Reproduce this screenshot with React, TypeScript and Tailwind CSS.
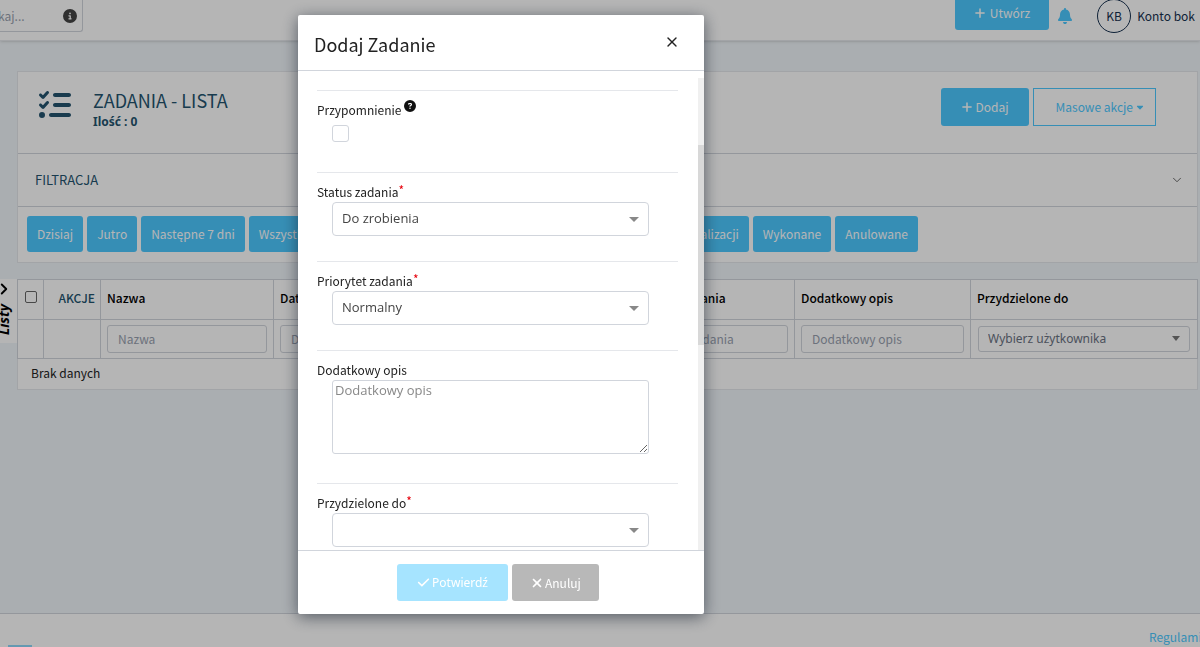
import type { ReactNode } from "react"
import { FaBell, FaCaretDown, FaCheck, FaCircleInfo, FaCircleQuestion, FaListCheck, FaPlus, FaXmark } from "react-icons/fa6"
import { ChevronDown, X } from "lucide-react"

const dayFilters = ["Dzisiaj", "Jutro", "Następne 7 dni"]
const hiddenFilters = ["Wszystkie", "Przeterminowane", "Do zrobienia", "W trakcie realizacji"]
const statusFilters = ["Wykonane", "Anulowane"]

const FilterButton = ({ children, grow }: { children: ReactNode; grow?: boolean }) => (
  <button className={`h-9 rounded-[3px] bg-[#4dc9ff] px-[10px] text-xs whitespace-nowrap text-white ${grow ? "grow" : ""}`}>
    {children}
  </button>
)

const TopBar = () => (
  <header className="flex h-[41px] shrink-0 justify-between border-b border-gray-200 bg-white shadow-sm">
    <div className="-ml-8 flex h-8 w-[115px] items-center rounded-br-[3px] border-r border-b border-gray-300 pr-[5px]">
      <input aria-label="Szukaj" placeholder="Szukaj..." className="w-full min-w-0 pl-[10px] text-xs placeholder:text-gray-400" />
      <FaCircleInfo className="size-[14px] shrink-0 text-[#444]" />
    </div>
    <div className="flex h-8 items-center pr-[5px]">
      <button className="mb-[2px] flex h-[38px] items-center gap-1 self-end rounded-[3px] bg-[#4dc9ff] px-[19px] pt-1 text-xs text-white">
        <FaPlus className="size-3" />
        Utwórz
      </button>
      <button aria-label="Powiadomienia" className="ml-2 text-[#4dc9ff]">
        <FaBell className="size-4" />
      </button>
      <a href="#konto" className="ml-6 flex items-center gap-[6px] text-xs whitespace-nowrap text-[#16304f]">
        <span className="flex size-[34px] items-center justify-center rounded-full border border-[#16304f]">KB</span>
        Konto bok
      </a>
    </div>
  </header>
)

const ListHeader = () => (
  <section className="border border-gray-200 bg-white">
    <div className="flex h-[81px] items-start pt-4 pr-[41px] pl-[21px]">
      <FaListCheck className="mt-px size-8 text-[#24546f]" />
      <div className="ml-[22px] text-[#24546f]">
        <h1 className="text-lg leading-6">ZADANIA - LISTA</h1>
        <p className="font-['Noto_Sans',sans-serif] text-xs leading-5 font-bold">Ilość : 0</p>
      </div>
      <div className="ml-auto flex gap-1">
        <button className="flex h-[38px] items-center gap-[3px] rounded-[3px] bg-[#4dc9ff] px-5 text-xs text-white">
          <FaPlus className="size-3" />
          Dodaj
        </button>
        <button className="flex h-[38px] items-center gap-[2px] border border-[#4dc9ff] pr-[10px] pl-[22px] text-xs text-[#4dc9ff]">
          Masowe akcje
          <FaCaretDown className="size-[10px]" />
        </button>
      </div>
    </div>
    <button className="flex h-[54px] w-full items-center justify-between border-y border-gray-300 pr-[13px] pl-[17px] text-[13px] text-[#24546f]">
      FILTRACJA
      <ChevronDown className="size-[14px] text-[#555]" strokeWidth={1.5} />
    </button>
    <div className="flex h-[55px] items-center gap-1 pb-[2px] pl-[9px]">
      {dayFilters.map((f) => <FilterButton key={f}>{f}</FilterButton>)}
      <div className="flex w-[500px] gap-1">
        {hiddenFilters.map((f, i) => <FilterButton key={f} grow={i === 1 || i === 2}>{f}</FilterButton>)}
      </div>
      {statusFilters.map((f) => <FilterButton key={f}>{f}</FilterButton>)}
    </div>
  </section>
)

const ColumnFilter = ({ label }: { label: string }) => (
  <input aria-label={label} placeholder={label} className="block h-7 w-full rounded-[3px] border border-gray-300 px-[10px] pb-[2px] text-xs placeholder:text-gray-400" />
)

const textColumns = ["Nazwa", "Data dodania", "Status zadania", "Priorytet zadania", "Dodatkowy opis"]

const TaskTable = () => (
  <table className="mt-4 w-full table-fixed border-collapse bg-white text-xs">
    <colgroup>
      <col className="w-[26px]" />
      <col className="w-[57px]" />
      <col className="w-[173px]" />
      <col className="w-[174px]" />
      <col className="w-[173px]" />
      <col className="w-[174px]" />
      <col className="w-[176px]" />
      <col />
    </colgroup>
    <thead>
      <tr className="h-10">
        <th className="border border-gray-300 pb-[6px]">
          <input type="checkbox" aria-label="Zaznacz wszystkie" className="mx-auto block size-3 appearance-none rounded-[2px] border border-[#666]" />
        </th>
        <th className="border border-gray-300 pr-[5px] pb-1 text-right font-medium text-[#24546f]">AKCJE</th>
        {[...textColumns, "Przydzielone do"].map((c) => (
          <th key={c} className="border border-gray-300 px-[6px] pb-1 text-left font-medium text-black">{c}</th>
        ))}
      </tr>
      <tr className="h-[39px]">
        <td className="border border-gray-300"></td>
        <td className="border border-gray-300"></td>
        {textColumns.map((c) => (
          <td key={c} className="border border-gray-300 px-[6px]"><ColumnFilter label={c} /></td>
        ))}
        <td className="border border-gray-300 px-[7px]">
          <div className="relative">
            <select aria-label="Przydzielone do" className="block h-[26px] w-full appearance-none rounded-[3px] border border-gray-300 px-[9px] font-['Noto_Sans',sans-serif] text-xs text-gray-500">
              <option>Wybierz użytkownika</option>
            </select>
            <svg viewBox="0 0 8 5" className="pointer-events-none absolute top-[10px] right-[10px] w-2 text-[#777]"><path d="M0 0h8L4 5z" fill="currentColor" /></svg>
          </div>
        </td>
      </tr>
    </thead>
    <tbody>
      <tr className="h-[31px]">
        <td colSpan={8} className="border border-gray-200 px-[13px] pb-[2px] text-[#222]">Brak danych</td>
      </tr>
    </tbody>
  </table>
)

const Field = ({ id, label, required, hint, children }: { id: string; label: string; required?: boolean; hint?: boolean; children: ReactNode }) => (
  <div className="border-t border-gray-200 pt-[9px]">
    <label htmlFor={id} className="flex h-5 text-xs leading-5 text-[#222]">
      {label}
      {required && <span className="leading-4 text-red-600">*</span>}
      {hint && <FaCircleQuestion className="ml-[3px] size-3 text-[#111]" />}
    </label>
    <div className="pr-[29px] pl-[15px]">{children}</div>
  </div>
)

const SelectBox = ({ id, value }: { id: string; value: string }) => (
  <div className="relative mb-[25px]">
    <select id={id} className="block h-[34px] w-full appearance-none rounded-[4px] border border-gray-300 bg-white px-[9px] font-['Open_Sans',sans-serif] text-[13px] text-[#444]">
      <option>{value}</option>
    </select>
    <svg viewBox="0 0 10 5" className="pointer-events-none absolute top-[15px] right-[10px] w-[10px] text-[#888]"><path d="M0 0h10L5 5z" fill="currentColor" /></svg>
  </div>
)

const TaskDialog = () => (
  <div className="fixed inset-0 flex items-start justify-center bg-black/29 pt-[15px] pr-[198px]">
    <div role="dialog" aria-labelledby="dialog-title" className="flex h-[calc(100vh-48px)] w-[406px] flex-col rounded-[2px] bg-white shadow-[0_3px_16px_rgba(20,30,45,0.6)]">
      <div className="flex h-14 shrink-0 items-center justify-between border-b border-gray-300 pr-6 pb-[2px] pl-4">
        <h2 id="dialog-title" className="pt-1 text-lg text-[#222]">Dodaj Zadanie</h2>
        <button aria-label="Zamknij" className="text-[#222]">
          <X className="size-4" strokeWidth={2} />
        </button>
      </div>
      <div className="flex min-h-0 grow">
        <form className="grow overflow-hidden pt-[19px] pr-5 pl-[19px]">
          <Field id="reminder" label="Przypomnienie" hint>
            <input id="reminder" type="checkbox" className="mt-[5px] mb-[30px] block size-[17px] appearance-none rounded-[3px] border border-gray-300" />
          </Field>
          <Field id="status" label="Status zadania" required>
            <SelectBox id="status" value="Do zrobienia" />
          </Field>
          <Field id="priority" label="Priorytet zadania" required>
            <SelectBox id="priority" value="Normalny" />
          </Field>
          <Field id="description" label="Dodatkowy opis">
            <textarea id="description" placeholder="Dodatkowy opis" className="mb-[29px] block h-[74px] w-full rounded-[3px] border border-gray-300 px-[2px] font-['Open_Sans',sans-serif] text-[13px] placeholder:text-[#888]" />
          </Field>
          <Field id="assignee" label="Przydzielone do" required>
            <SelectBox id="assignee" value="" />
          </Field>
        </form>
        <div className="mt-[7px] w-[6px] shrink-0 bg-[#f0f0f0] pt-[67px]">
          <div className="h-[200px] bg-[#d8d8d8]"></div>
        </div>
      </div>
      <div className="flex h-16 shrink-0 items-center justify-center gap-1 border-t border-gray-300 pr-[6px] text-xs text-white">
        <button className="flex h-[37px] items-center gap-[2px] rounded-[3px] bg-[#a6e4ff] px-5 font-['Noto_Sans',sans-serif]">
          <FaCheck className="size-[13px]" />
          Potwierdź
        </button>
        <button className="flex h-[37px] items-center gap-[1px] rounded-[3px] bg-[#b8b8b8] px-[18px]">
          <FaXmark className="size-[14px]" />
          Anuluj
        </button>
      </div>
    </div>
  </div>
)

export default function App() {
  return (
    <div className="relative flex h-screen flex-col overflow-hidden bg-[#f0f5f9] font-['Noto_Sans_CJK_SC','Noto_Sans',sans-serif]">
      <TopBar />
      <main className="grow pt-[30px] pr-[2px] pl-[17px]">
        <ListHeader />
        <TaskTable />
      </main>
      <button className="absolute top-[279px] left-0 flex h-16 w-[17px] flex-col items-start bg-white pt-[1px] text-black">
        <ChevronDown className="-ml-[5px] size-[18px] shrink-0 -rotate-90" strokeWidth={2.5} />
        <span className="-ml-1 mt-[6px] rotate-180 font-['Open_Sans',sans-serif] text-sm leading-4 font-bold italic [writing-mode:vertical-rl]">Listy</span>
      </button>
      <footer className="flex h-[34px] shrink-0 justify-between overflow-hidden border-t border-gray-300 bg-white pl-2 text-xs text-[#4dc9ff]">
        <span className="mt-[31px] h-1 w-6 bg-[#8fd8fa]"></span>
        <a href="#regulamin" className="-mr-[9px] pt-[13px] leading-5">Regulamin</a>
      </footer>
      <TaskDialog />
    </div>
  )
}
